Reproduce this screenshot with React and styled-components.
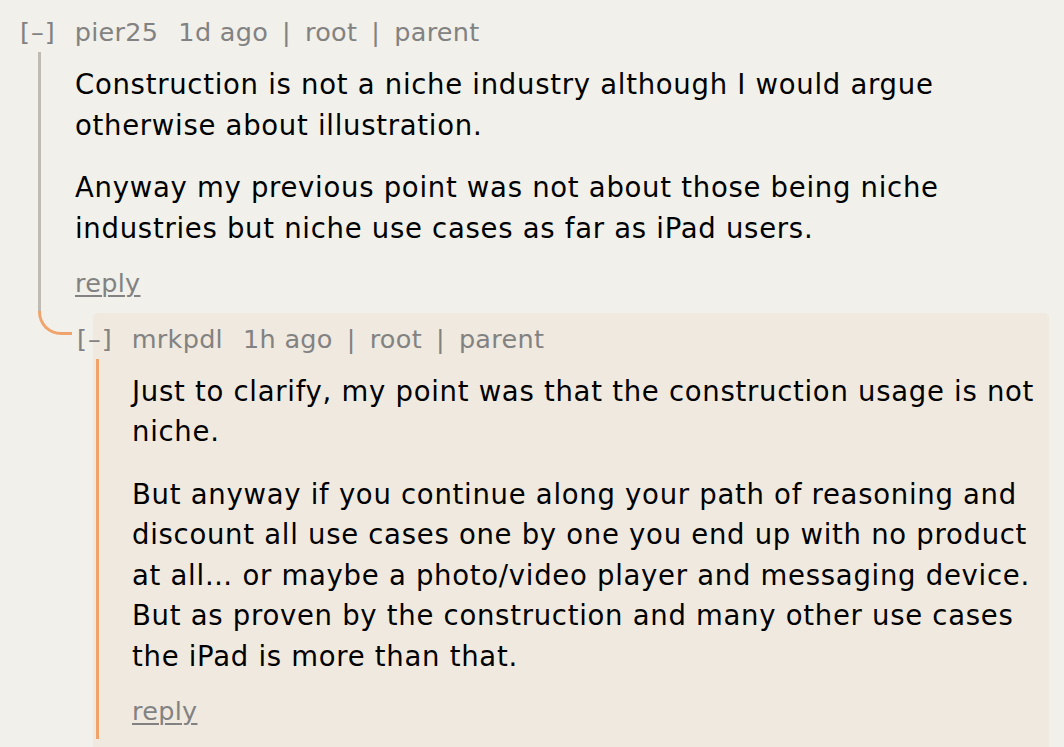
import styled, { createGlobalStyle } from 'styled-components';

const GlobalStyle = createGlobalStyle`
  html, body {
    margin: 0;
    padding: 0;
    background: #f1f0ea;
  }
  body {
    font-family: 'DejaVu Sans', Verdana, sans-serif;
    overflow: hidden;
  }
`;

const Page = styled.div`
  padding-top: 12px;
  min-height: 747px;
  box-sizing: border-box;
`;

const Header = styled.div`
  display: flex;
  align-items: center;
  height: 40px;
  padding-left: ${(p) => p.$indent || 0}px;
  font-size: 25.5px;
  letter-spacing: 0.3px;
  color: #828282;
  white-space: nowrap;
`;

const Toggle = styled.span`
  margin-right: 19px;
  margin-left: ${(p) => p.$shift || 0}px;
  letter-spacing: 1px;
`;

const User = styled.span`
  margin-right: 20px;
`;

const Sep = styled.span`
  margin: 0 14px;
`;

const Body = styled.div`
  margin-left: ${(p) => p.$offset}px;
  border-left: 3px solid ${(p) => p.$line};
  padding: 12px 10px 13.5px ${(p) => p.$pad}px;
  font-size: 27.5px;
  line-height: 40.5px;
  letter-spacing: 0.72px;
  color: #000;
  p {
    margin: 0 0 22px;
  }
`;

const Reply = styled.a`
  display: block;
  width: max-content;
  font-size: 25.5px;
  line-height: 27px;
  letter-spacing: 0.3px;
  color: #828282;
  text-decoration: underline;
  text-underline-offset: 3px;
  text-decoration-thickness: 2px;
`;

const ChildRow = styled.div`
  display: flex;
  align-items: flex-start;
`;

const Connector = styled.div`
  flex-shrink: 0;
  margin-left: 38px;
  width: 31px;
  height: 21px;
  border-left: 3px solid #f0a46c;
  border-bottom: 3px solid #f0a46c;
  border-bottom-left-radius: 23px;
`;

const ChildBox = styled.div`
  flex: 1;
  margin: 2px 15px 0 21px;
  padding-top: 6px;
  background: #f0e9df;
  border-radius: 5px 5px 0 0;
  min-height: 435px;
`;

function Meta({ user, age, indent, shift }) {
  return (
    <Header $indent={indent}>
      <Toggle $shift={shift}>[–]</Toggle>
      <User>{user}</User>
      <span>{age}</span>
      <Sep>|</Sep>
      <span>root</span>
      <Sep>|</Sep>
      <span>parent</span>
    </Header>
  );
}

export default function App() {
  return (
    <>
      <GlobalStyle />
      <Page>
        <Meta user="pier25" age="1d ago" indent={20} />
        <Body $offset={38} $pad={34} $line="#bdbbb3">
          <p>
            Construction is not a niche industry although I would argue
            otherwise about illustration.
          </p>
          <p>
            Anyway my previous point was not about those being niche
            industries but niche use cases as far as iPad users.
          </p>
          <Reply>reply</Reply>
        </Body>
        <ChildRow>
          <Connector />
          <ChildBox>
            <Meta user="mrkpdl" age="1h ago" shift={-16} />
            <Body $offset={3} $pad={33} $line="#f0a46c">
              <p>
                Just to clarify, my point was that the construction usage is
                not niche.
              </p>
              <p>
                But anyway if you continue along your path of reasoning and
                discount all use cases one by one you end up with no product
                at all… or maybe a photo/video player and messaging device.
                But as proven by the construction and many other use cases
                the iPad is more than that.
              </p>
              <Reply>reply</Reply>
            </Body>
          </ChildBox>
        </ChildRow>
      </Page>
    </>
  );
}
